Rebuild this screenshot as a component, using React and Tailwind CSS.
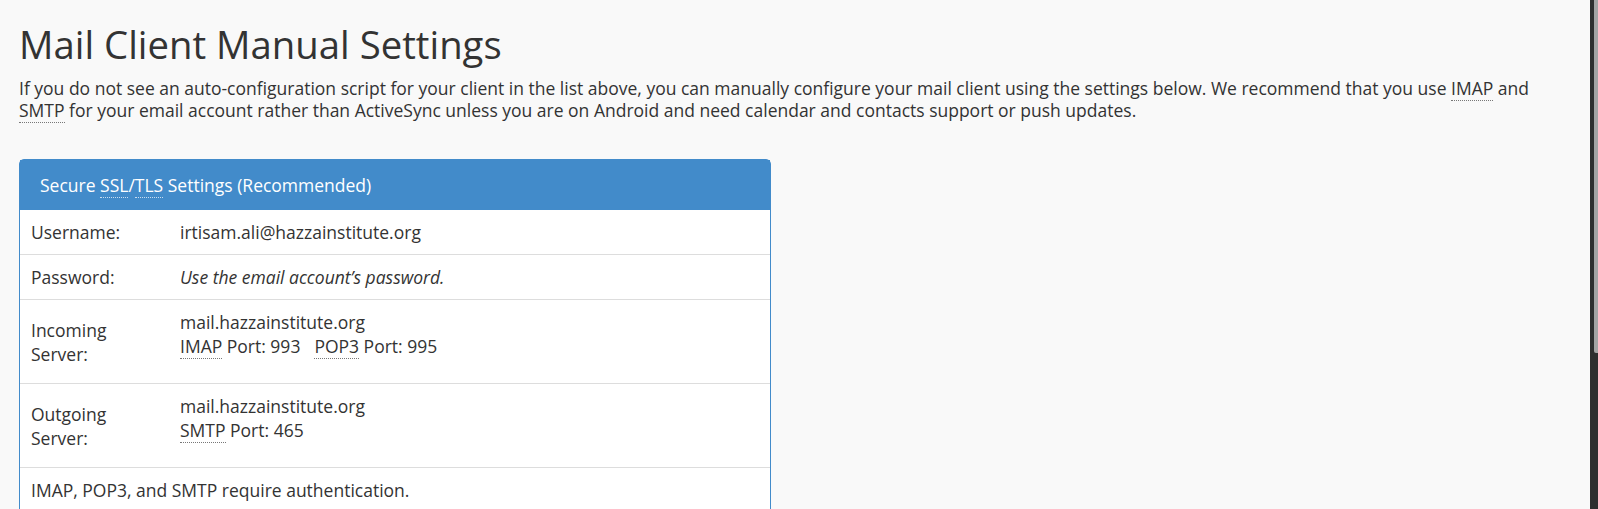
import React from 'react'

const Abbr = ({ title, light, children }) => (
  <abbr
    title={title}
    className={
      'no-underline border-b border-dotted cursor-help ' +
      (light ? 'border-[#c9ddf0]' : 'border-[#777]')
    }
  >
    {children}
  </abbr>
)

const Row = ({ label, children, tall }) => (
  <tr className="border-t border-[#dddddd] first:border-t-0">
    <td className="w-[150px] pl-[11px] pr-[10px] py-[10px] align-middle">{label}</td>
    <td className="pl-[10px] pr-[10px] py-[10px] align-middle">
      <div className={tall ? 'mb-[15px]' : ''}>{children}</div>
    </td>
  </tr>
)

export default function App() {
  return (
    <div className="flex h-[509px] overflow-hidden bg-[#f9f9f9] text-[#333] font-['Open_Sans',sans-serif]">
      <main className="flex-1 pl-[19px] pt-[23px]">
        <h1 className="text-[38.3px] leading-[1.1] font-normal">Mail Client Manual Settings</h1>
        <p className="mt-[13px] w-[1540px] text-[17.5px] leading-[21.5px]">
          If you do not see an auto-configuration script for your client in the list above, you can
          manually configure your mail client using the settings below. We recommend that you use{' '}
          <Abbr title="Internet Message Access Protocol">IMAP</Abbr> and{' '}
          <Abbr title="Simple Mail Transfer Protocol">SMTP</Abbr> for your email account rather than
          ActiveSync unless you are on Android and need calendar and contacts support or push updates.
        </p>

        <div className="mt-[38px] w-[752px] rounded-t-[5px] border border-[#428bca] bg-white text-[17.5px] leading-[24px]">
          <div className="bg-[#428bca] px-[20px] py-[13px] text-white">
            Secure <Abbr title="Secure Sockets Layer" light>SSL</Abbr>/
            <Abbr title="Transport Layer Security" light>TLS</Abbr> Settings (Recommended)
          </div>
          <table className="w-full border-collapse">
            <tbody>
              <Row label="Username:">irtisam.ali@hazzainstitute.org</Row>
              <Row label="Password:">
                <em>Use the email account’s password.</em>
              </Row>
              <Row label="Incoming Server:" tall>
                <div>mail.hazzainstitute.org</div>
                <div>
                  <Abbr title="Internet Message Access Protocol">IMAP</Abbr> Port: 993
                  <span className="ml-[14px]">
                    <Abbr title="Post Office Protocol 3">POP3</Abbr> Port: 995
                  </span>
                </div>
              </Row>
              <Row label="Outgoing Server:" tall>
                <div>mail.hazzainstitute.org</div>
                <div>
                  <Abbr title="Simple Mail Transfer Protocol">SMTP</Abbr> Port: 465
                </div>
              </Row>
              <tr className="border-t border-[#dddddd]">
                <td colSpan={2} className="pl-[11px] pr-[10px] py-[10px]">
                  IMAP, POP3, and SMTP require authentication.
                </td>
              </tr>
            </tbody>
          </table>
        </div>
      </main>

      <div className="flex w-[8px] flex-col bg-[#2e2e2e]">
        <div className="ml-[4px] h-[353px] rounded-bl-[2px] bg-[#a3a3a3]" />
      </div>
    </div>
  )
}
